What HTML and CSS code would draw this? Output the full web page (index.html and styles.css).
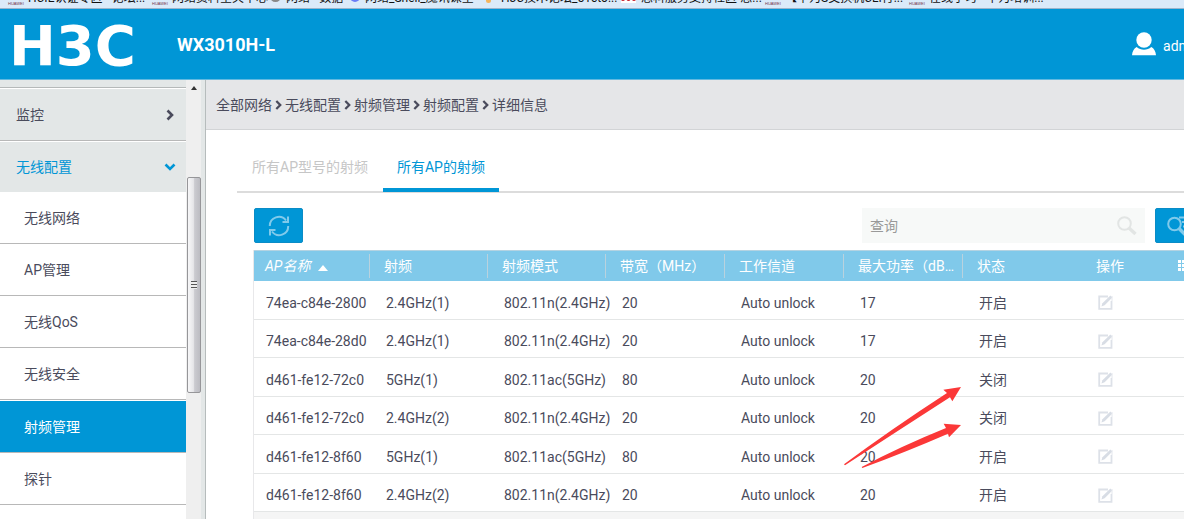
FILE: index.html
```html
<!DOCTYPE html>
<html lang="zh-CN">
<head>
<meta charset="utf-8">
<title>WX3010H-L</title>
<link rel="stylesheet" href="styles.css">
</head>
<body>
<svg class="defs" aria-hidden="true">
  <symbol id="chevron" viewBox="0 0 8 12"><path d="M1.5 1.5 6 6 1.5 10.5" fill="none" stroke="currentColor" stroke-width="2.6"/></symbol>
  <symbol id="edit" viewBox="0 0 15 15"><path d="M10 1.5H1.2v12.3h12.3V6" fill="none" stroke="#dde1e8" stroke-width="1.8"/><path d="M12.4.6l2 1.8-7.8 7.8-3.2 1.4 1-3.4z" fill="#d8dde5"/><path d="M14 1v5" stroke="#e4e7ed"/></symbol>
</svg>

<nav class="bookmarks" aria-label="书签">
  <a class="bm bm-1" href="#"><i class="fav">HUAWEI</i>HCIE认证专区 - 论坛...</a>
  <a class="bm bm-2" href="#"><i class="fav">HUAWEI</i>网络资料全关中心</a>
  <a class="bm bm-3" href="#"><i class="fav-ring"></i>网络 - 数据</a>
  <a class="bm bm-4" href="#"><i class="fav-gem"></i>网络_Shell_魔讯课堂</a>
  <a class="bm bm-5" href="#"><i class="fav-dot"></i>H3C技术论坛_51cto...</a>
  <a class="bm bm-6" href="#"><i class="fav-red"></i>思科服务支持社区-思...</a>
  <a class="bm bm-7" href="#"><i class="fav">HUAWEI</i>【华为S交换机CLI行...</a>
  <a class="bm bm-8" href="#"><i class="fav">HUAWEI</i>在线学习 - 华为培训...</a>
</nav>

<header class="header">
  <span class="logo">H3C</span>
  <h1 class="model">WX3010H-L</h1>
  <a class="user" href="#">
    <svg width="24" height="24" viewBox="0 0 24 24" fill="#fff" aria-hidden="true"><circle cx="12" cy="8" r="7.7"/><path d="M0 23.3c.3-4 2-7 4.700-8.300 4 3.600 10.600 3.600 14.600 0 2.700 1.300 4.400 4.300 4.700 8.300z"/></svg>
    <span>admin</span>
  </a>
</header>

<div class="layout">
  <aside class="sidebar">
    <nav class="menu">
      <div class="menu-rest"></div>
      <a class="group" href="#">监控<svg class="chev" width="8" height="12"><use href="#chevron"/></svg></a>
      <a class="group open" href="#">无线配置<svg class="chev down" width="8" height="12"><use href="#chevron"/></svg></a>
      <a class="item" href="#">无线网络</a>
      <a class="item" href="#">AP管理</a>
      <a class="item" href="#">无线QoS</a>
      <a class="item" href="#">无线安全</a>
      <a class="item active" href="#">射频管理</a>
      <a class="item" href="#">探针</a>
    </nav>
    <div class="scroll">
      <i class="scroll-up"></i>
      <div class="thumb"><i class="grip"></i></div>
    </div>
  </aside>

  <main class="main">
    <nav class="crumbs">
      <a href="#">全部网络</a><svg width="7" height="12"><use href="#chevron"/></svg>
      <a href="#">无线配置</a><svg width="7" height="12"><use href="#chevron"/></svg>
      <a href="#">射频管理</a><svg width="7" height="12"><use href="#chevron"/></svg>
      <a href="#">射频配置</a><svg width="7" height="12"><use href="#chevron"/></svg>
      <span>详细信息</span>
    </nav>

    <div class="tabs">
      <button class="tab" type="button">所有AP型号的射频</button>
      <button class="tab active" type="button">所有AP的射频</button>
    </div>

    <section class="panel">
      <div class="tools">
        <button class="btn" type="button" aria-label="刷新">
          <svg width="22" height="22" viewBox="0 0 22 22" fill="none" stroke="#80caeb" stroke-width="2"><path d="M1.800 11A9 9 0 0 1 18 5.500M20.200 11A9 9 0 0 1 4 16.500"/><path d="M20 1.500V7h-5.500M2 20.500V15h5.500"/></svg>
        </button>
        <div class="search">
          <input type="text" placeholder="查询" aria-label="查询">
          <svg width="20" height="20" viewBox="0 0 20 20" fill="none" stroke="#e2e5e4"><circle cx="7.500" cy="7.500" r="6.300" stroke-width="2"/><path d="M12 12l6.500 6" stroke-width="3.400"/></svg>
        </div>
        <button class="btn advanced" type="button" aria-label="高级查询">
          <svg width="26" height="20" viewBox="0 0 26 20" fill="none" stroke="#80caeb"><circle cx="7.500" cy="8" r="6.300" stroke-width="2"/><path d="M12 12.500l6 6" stroke-width="3.400"/><path d="M12 1.500h14M15 6h11M16 10.500h10" stroke-width="2"/></svg>
        </button>
      </div>

      <div class="table-wrap">
        <table>
          <colgroup><col class="c-name"><col class="c"><col class="c"><col class="c-wide"><col class="c-wide"><col class="c-wide"><col class="c-wide"><col></colgroup>
          <thead>
            <tr><th class="sorted">AP名称<i class="asc"></i></th><th>射频</th><th>射频模式</th><th>带宽（MHz）</th><th>工作信道</th><th>最大功率（dBm）</th><th class="plain">状态</th><th class="plain last">操作<svg class="cols" width="12" height="11" viewBox="0 0 12 11" fill="#fff"><path d="M0 0h3v3H0zM4 0h8v3H4zM0 4h3v3H0zM4 4h8v3H4zM0 8h3v3H0zM4 8h8v3H4z"/></svg></th></tr>
          </thead>
          <tbody>
            <tr><td>74ea-c84e-2800</td><td>2.4GHz(1)</td><td>802.11n(2.4GHz)</td><td>20</td><td>Auto unlock</td><td>17</td><td>开启</td><td><button class="edit" type="button" aria-label="编辑"><svg width="15" height="15"><use href="#edit"/></svg></button></td></tr>
            <tr><td>74ea-c84e-28d0</td><td>2.4GHz(1)</td><td>802.11n(2.4GHz)</td><td>20</td><td>Auto unlock</td><td>17</td><td>开启</td><td><button class="edit" type="button" aria-label="编辑"><svg width="15" height="15"><use href="#edit"/></svg></button></td></tr>
            <tr><td>d461-fe12-72c0</td><td>5GHz(1)</td><td>802.11ac(5GHz)</td><td>80</td><td>Auto unlock</td><td>20</td><td>关闭</td><td><button class="edit" type="button" aria-label="编辑"><svg width="15" height="15"><use href="#edit"/></svg></button></td></tr>
            <tr><td>d461-fe12-72c0</td><td>2.4GHz(2)</td><td>802.11n(2.4GHz)</td><td>20</td><td>Auto unlock</td><td>20</td><td>关闭</td><td><button class="edit" type="button" aria-label="编辑"><svg width="15" height="15"><use href="#edit"/></svg></button></td></tr>
            <tr><td>d461-fe12-8f60</td><td>5GHz(1)</td><td>802.11ac(5GHz)</td><td>80</td><td>Auto unlock</td><td>20</td><td>开启</td><td><button class="edit" type="button" aria-label="编辑"><svg width="15" height="15"><use href="#edit"/></svg></button></td></tr>
            <tr><td>d461-fe12-8f60</td><td>2.4GHz(2)</td><td>802.11n(2.4GHz)</td><td>20</td><td>Auto unlock</td><td>20</td><td>开启</td><td><button class="edit" type="button" aria-label="编辑"><svg width="15" height="15"><use href="#edit"/></svg></button></td></tr>
          </tbody>
        </table>
        <div class="pager"></div>
        <svg class="arrows" width="124" height="90" viewBox="30 120 372 270" fill="#fb3838" aria-hidden="true"><path d="M42 373Q180 270 351 159L340 149 393 141 367 184 360 172Q200 275 45 376z"/><path d="M95 381Q210 320 348 264L341 251 393 255 357 292 354 281Q230 335 97 384z"/></svg>
      </div>
    </section>
  </main>
</div>
</body>
</html>
```

FILE: styles.css
```css
* { box-sizing: border-box; }

body {
  margin: 0;
  height: 100vh;
  display: flex;
  flex-direction: column;
  overflow: hidden;
  background: #fff;
  color: #4a4b5c;
  font: 14px/20px Roboto, "Noto Sans CJK SC", sans-serif;
}

a { color: inherit; text-decoration: none; }
button, input { font: inherit; color: inherit; border: 0; padding: 0; background: none; }
button { cursor: pointer; }
.defs { position: absolute; width: 0; height: 0; }

.bookmarks {
  flex: none;
  height: 9px;
  display: flex;
  align-items: flex-end;
  overflow: hidden;
  padding: 0 8px 2px;
  background: #dbeaf9;
  border-bottom: 1px solid #9ab4cc;
  color: #111;
  font-size: 12px;
  line-height: 16px;
  white-space: nowrap;
}
.bm { display: flex; flex: none; align-items: flex-end; gap: 5px; }
.bm-1 { width: 144px; }
.bm-2 { width: 118px; }
.bm-3 { width: 80px; }
.bm-4 { width: 131px; }
.bm-5 { width: 140px; }
.bm-6 { width: 144px; }
.bm-7 { width: 144px; }
.bm-8 { width: 140px; }
.fav { width: 15px; font: 4px/5px "Liberation Sans", sans-serif; color: #743848; }
.fav-ring { width: 11px; height: 11px; margin-bottom: 4px; border: 2px solid #888; border-radius: 50%; background: #fff; }
.fav-gem { width: 10px; height: 10px; margin-bottom: 4px; background: #6a7cf6; border-radius: 2px 2px 5px 5px; }
.fav-dot { width: 5px; height: 5px; margin: 0 5px 3px; background: #f5b45c; border-radius: 50%; }
.fav-red { width: 15px; height: 6px; margin-bottom: 3px; background: #fff; border-top: 4px dotted #c8202c; }

.header {
  flex: none;
  height: 71px;
  display: flex;
  align-items: center;
  padding: 0 0 0 9px;
  background: #0096d6;
  border-bottom: 1px solid #62b9e0;
  color: #fff;
  overflow: hidden;
}
.logo { width: 168px; font: bold 56px/60px "DejaVu Sans", sans-serif; padding-top: 4px; }
.model { margin: 0; padding-top: 2px; font-size: 18px; line-height: 24px; font-weight: 700; }
.user { display: flex; align-items: center; gap: 7px; margin: 0 -18px 0 auto; }
.user span { padding-top: 4px; }

.layout { flex: 1; min-height: 0; display: flex; }

.sidebar {
  flex: none;
  width: 206px;
  display: flex;
  background: #e3e7e7;
  border-right: 1px solid #b6bcbc;
  overflow: hidden;
}
.menu { flex: 1; background: #fff; }
.menu-rest { height: 8px; background: #e3e7e7; border-bottom: 1px solid #b5b9b9; }
.group, .item { display: flex; align-items: center; border-bottom: 1px solid #b8b8b8; height: 52px; }
.group {
  justify-content: space-between;
  height: 53px;
  padding: 0 12px 0 16px;
  background: #e3e7e7;
  border-top: 1px solid #fff;
}
.group.open { height: 51px; color: #0096d6; border-bottom: 0; }
.item { padding-left: 24px; }
.item.active { margin-top: 1px; background: #0096d6; color: #fff; }
.chev.down { transform: rotate(90deg); }

.scroll {
  width: 15px;
  margin-right: 4px;
  display: flex;
  flex-direction: column;
  align-items: center;
  padding-top: 6px;
  background: #efefef;
}
.scroll-up { border: 3px solid transparent; border-top: 0; border-bottom: 4px solid #333; }
.thumb {
  width: 14px;
  height: 216px;
  margin-top: 87px;
  display: flex;
  align-items: center;
  justify-content: center;
  border: 1px solid #969699;
  border-radius: 2px;
  background: linear-gradient(90deg, #f7f7f8, #e6e6e9 45%, #cbcbd0 55%, #bcbcc2);
}
.grip { width: 6px; height: 8px; background: repeating-linear-gradient(#555 0 1px, #eee 1px 3px); }

.main { flex: 1; min-width: 0; overflow: hidden; }

.crumbs {
  height: 50px;
  display: flex;
  align-items: center;
  gap: 3px;
  padding-left: 10px;
  background: #e5e6e8;
  border-bottom: 1px solid #d2d4d6;
}

.tabs {
  display: flex;
  margin: 11px 0 0 31px;
  height: 52px;
  border-bottom: 2px solid #dcdcdc;
}
.tab { height: 51px; padding: 4px 15px 0; color: #c6c6c6; border-bottom: 4px solid transparent; }
.tab.active { padding: 4px 14px 0; color: #0096d6; border-bottom-color: #0096d6; }

.panel { padding: 15px 0 0 47px; }
.tools { display: flex; align-items: center; padding-left: 1px; margin-bottom: 7px; }
.btn {
  width: 49px;
  height: 35px;
  display: flex;
  align-items: center;
  justify-content: center;
  background: #0096d6;
  border: 1px solid #0a8cc6;
  border-radius: 2px;
}
.advanced { flex: none; margin: 0 -20px 0 10px; }
.search {
  width: 283px;
  height: 35px;
  display: flex;
  align-items: center;
  margin-left: auto;
  padding: 0 8px;
  background: #f7f9f8;
}
.search input { flex: 1; min-width: 0; outline: 0; }
.search input::placeholder { color: #999; opacity: 1; }

.table-wrap { position: relative; border-left: 1px solid #e8e8ea; }
table { width: 100%; table-layout: fixed; border-collapse: separate; border-spacing: 0; }
.c-name { width: 116px; }
.c { width: 118px; }
.c-wide { width: 119px; }
th {
  height: 31px;
  padding: 0 6px 0 14px;
  text-align: left;
  font-weight: 400;
  color: #fff;
  white-space: nowrap;
  overflow: hidden;
  text-overflow: ellipsis;
  background: linear-gradient(#b9d2de, #b9d2de) right center / 1px 24px no-repeat #80c9ea;
  border-top: 1px solid #b4d3e2;
}
th.plain { background: #80c9ea; }
th.sorted { padding-left: 11px; font-style: italic; }
th.last { text-overflow: clip; padding-right: 0; }
.asc { display: inline-block; margin-left: 8px; border: 5px solid transparent; border-top: 0; border-bottom: 6px solid #fff; }
.cols { margin-left: 54px; }
td {
  height: 38px;
  padding: 5px 0 0 16px;
  white-space: nowrap;
  border-bottom: 1px solid #e4e6e6;
}
td:first-child { padding-left: 12px; }
tr:nth-child(odd) td { height: 39px; }
.edit, .edit svg { display: block; }
.pager { height: 40px; background: #f5f5f5; }

/* annotation arrows lie over the table rows */
.arrows { position: absolute; left: 586px; top: 130px; pointer-events: none; }
```
